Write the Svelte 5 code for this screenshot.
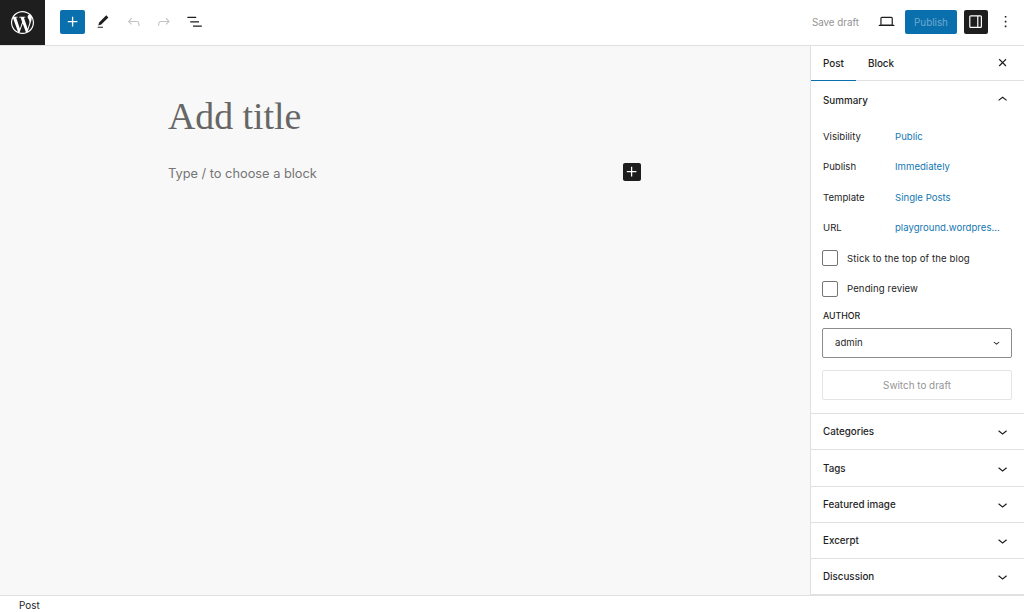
<script>
	const icons = {
		plus: 'M18 11.2h-5.2V6h-1.6v5.2H6v1.6h5.2V18h1.6v-5.2H18z',
		pen: 'M20.1 5.1L16.9 2 6.2 12.7l-1.3 4.4 4.5-1.3L20.1 5.1zM4 20.8h8v-1.5H4v1.5z',
		undo: 'M18.3 11.7c-.6-.6-1.4-.9-2.3-.9H6.7l2.9-3.3-1.1-1-4.5 5L8.5 16l1-1-2.7-2.7H16c.5 0 .9.2 1.3.5 1 1 1 3.4 1 4.5v.3h1.5v-.2c0-1.5 0-4.3-1.5-5.7z',
		redo: 'M15.6 6.5l-1.1 1 2.9 3.3H8c-.9 0-1.7.3-2.3.9-1.4 1.5-1.4 4.2-1.4 5.6v.2h1.5v-.3c0-1.1 0-3.5 1-4.5.3-.3.7-.5 1.3-.5h9.2L14.5 15l1.1 1.1 4.6-4.6-4.6-5z',
		list: 'M3 6h11v1.5H3V6zm3.5 5.5h11V13h-11v-1.5zM21 17H10v1.5h11V17z',
		laptop: 'M20.5 16h-.7V8c0-1.1-.9-2-2-2H6.2c-1.1 0-2 .9-2 2v8h-.7c-.8 0-1.5.7-1.5 1.5h20c0-.8-.7-1.5-1.5-1.5zM5.7 8c0-.3.2-.5.5-.5h11.6c.3 0 .5.2.5.5v7.6H5.7V8z',
		drawer: 'M18 4H6c-1.1 0-2 .9-2 2v12c0 1.1.9 2 2 2h12c1.1 0 2-.9 2-2V6c0-1.1-.9-2-2-2zm-4 14.5H6c-.3 0-.5-.2-.5-.5V6c0-.3.2-.5.5-.5h8v13zm4.5-.5c0 .3-.2.5-.5.5h-2.5v-13H18c.3 0 .5.2.5.5v12z',
		more: 'M13 19h-2v-2h2v2zm0-6h-2v-2h2v2zm0-6h-2V5h2v2z',
		close: 'M12 13.06l3.712 3.713 1.061-1.06L13.061 12l3.712-3.712-1.06-1.06L12 10.938 8.288 7.227l-1.061 1.06L10.939 12l-3.712 3.712 1.06 1.061L12 13.061z',
		up: 'M6.5 12.4L12 8l5.5 4.4-.9 1.2L12 10l-4.5 3.6-1-1.2z',
		down: 'M17.5 11.6L12 16l-5.5-4.4.9-1.2L12 14l4.5-3.6 1 1.2z'
	};
	const wp =
		'M21.469 6.825c.84 1.537 1.318 3.3 1.318 5.175 0 3.979-2.156 7.456-5.363 9.325l3.295-9.527c.615-1.54.82-2.771.82-3.864 0-.405-.026-.78-.07-1.11m-7.981.105c.647-.03 1.232-.105 1.232-.105.582-.075.514-.93-.067-.899 0 0-1.755.135-2.88.135-1.064 0-2.85-.15-2.85-.15-.585-.03-.661.855-.075.885 0 0 .54.061 1.125.09l1.68 4.605-2.37 7.08L5.354 6.9c.649-.03 1.234-.1 1.234-.1.585-.075.516-.93-.065-.896 0 0-1.746.138-2.874.138-.2 0-.438-.008-.69-.015C4.911 3.15 8.235 1.215 12 1.215c2.809 0 5.365 1.072 7.286 2.833-.046-.003-.091-.009-.141-.009-1.06 0-1.812.923-1.812 1.914 0 .89.513 1.643 1.06 2.531.411.72.89 1.643.89 2.977 0 .915-.354 2-.821 3.479l-1.075 3.585-3.9-11.61.001.014zM12 22.784c-1.059 0-2.081-.153-3.048-.437l3.237-9.406 3.315 9.087c.024.053.05.101.078.149-1.12.393-2.325.609-3.582.609M1.211 12c0-1.564.336-3.05.935-4.39L7.29 21.709C3.694 19.96 1.212 16.271 1.211 12M12 0C5.385 0 0 5.385 0 12s5.385 12 12 12 12-5.385 12-12S18.615 0 12 0';

	const rows = [
		['Visibility', 'Public'],
		['Publish', 'Immediately'],
		['Template', 'Single Posts'],
		['URL', 'playground.wordpres...']
	];
	const checks = ['Stick to the top of the blog', 'Pending review'];
	const panels = ['Categories', 'Tags', 'Featured image', 'Excerpt', 'Discussion'];
</script>

{#snippet icon(name, cls = '')}
	<svg class="icon {cls}" viewBox="0 0 24 24" aria-hidden="true"><path d={icons[name]} /></svg>
{/snippet}

<div class="editor">
	<header class="top">
		<a class="logo" href="#home" aria-label="WordPress">
			<svg viewBox="0 0 24 24" aria-hidden="true"><path d={wp} /></svg>
		</a>
		<div class="tools">
			<button class="inserter">{@render icon('plus')}</button>
			<button class="tool">{@render icon('pen', 'pen')}</button>
			<button class="tool off">{@render icon('undo', 'arrow')}</button>
			<button class="tool off">{@render icon('redo', 'arrow')}</button>
			<button class="tool">{@render icon('list')}</button>
		</div>
		<div class="actions">
			<span class="save">Save draft</span>
			<button class="tool view">{@render icon('laptop')}</button>
			<button class="publish">Publish</button>
			<button class="toggle">{@render icon('drawer')}</button>
			<button class="tool more">{@render icon('more')}</button>
		</div>
	</header>

	<div class="body">
		<main class="canvas">
			<div class="doc">
				<h1>Add title</h1>
				<div class="para">
					<span>Type / to choose a block</span>
					<button class="block-add">{@render icon('plus')}</button>
				</div>
			</div>
		</main>

		<aside class="side">
			<div class="tabs">
				<span class="tab active">Post</span>
				<span class="tab">Block</span>
				<button class="tool close">{@render icon('close')}</button>
			</div>

			<section class="summary">
				<div class="panel-head">
					<span>Summary</span>
					{@render icon('up')}
				</div>
				<div class="fields">
					{#each rows as [label, value]}
						<div class="row">
							<span class="label">{label}</span>
							<span class="value">{value}</span>
						</div>
					{/each}
					{#each checks as c}
						<label class="check"><span class="box"></span>{c}</label>
					{/each}
				</div>
				<div class="author">AUTHOR</div>
				<div class="select">
					<span>admin</span>
					{@render icon('down')}
				</div>
				<button class="switch">Switch to draft</button>
			</section>

			{#each panels as p}
				<div class="panel">
					<span>{p}</span>
					{@render icon('down')}
				</div>
			{/each}
		</aside>
	</div>

	<footer class="status">Post</footer>
</div>

<style>
	:global(body) {
		margin: 0;
	}

	.editor {
		width: 1024px;
		height: 612px;
		display: flex;
		flex-direction: column;
		overflow: hidden;
		background: #fff;
		color: #1e1e1e;
		font-family: Inter, 'Liberation Sans', sans-serif;
		font-size: 9.6px;
	}

	button {
		border: 0;
		padding: 0;
		background: none;
		font: inherit;
		color: inherit;
	}

	.icon {
		display: block;
		width: 19.2px;
		height: 19.2px;
		fill: currentColor;
		flex: none;
	}

	.icon.pen {
		width: 16px;
		height: 16px;
	}

	.icon.arrow {
		width: 17.6px;
		height: 17.6px;
	}

	.top {
		height: 44px;
		padding-bottom: 1px;
		flex: none;
		display: flex;
		align-items: center;
		border-bottom: 1px solid #e0e0e0;
	}

	.logo {
		width: 45px;
		height: 45px;
		align-self: flex-start;
		background: #1e1e1e;
		display: flex;
		align-items: center;
		justify-content: center;
	}

	.logo svg {
		width: 23px;
		height: 23px;
		fill: #fff;
	}

	.tools {
		display: flex;
		align-items: center;
		margin-left: 15px;
		gap: 5.5px;
	}

	.inserter {
		width: 25px;
		height: 24px;
		background: #0a70ad;
		color: #fff;
		border-radius: 2px;
		display: flex;
		align-items: center;
		justify-content: center;
	}

	.tool {
		width: 25px;
		height: 24px;
		display: flex;
		align-items: center;
		justify-content: center;
	}

	.off {
		color: #c4c4c4;
	}

	.actions {
		margin-left: auto;
		display: flex;
		align-items: center;
		padding-right: 6px;
	}

	.save {
		color: #949494;
		margin-right: 15px;
		font-size: 9.8px;
	}

	.publish {
		width: 52px;
		height: 24px;
		margin-left: 6px;
		background: #0a70ad;
		color: #6fa8d0;
		border-radius: 2px;
		font-size: 9.8px;
	}

	.toggle {
		width: 24px;
		height: 24px;
		margin-left: 7px;
		background: #1e1e1e;
		color: #fff;
		border-radius: 2px;
		display: flex;
		align-items: center;
		justify-content: center;
	}

	.more {
		margin-left: 5px;
		width: 25px;
	}

	.body {
		flex: 1;
		min-height: 0;
		display: flex;
	}

	.canvas {
		flex: 1;
		background: #f8f8f8;
	}

	.doc {
		width: 473px;
		margin-left: 168px;
		padding-top: 49px;
	}

	h1 {
		margin: 0;
		height: 42px;
		font-family: 'Liberation Serif', serif;
		font-weight: 400;
		font-size: 37.8px;
		line-height: 42px;
		color: #666;
	}

	.para {
		margin-top: 26px;
		display: flex;
		align-items: center;
		justify-content: space-between;
		font-size: 12.8px;
		color: #757575;
	}

	.block-add {
		width: 18px;
		height: 18px;
		margin-bottom: 2px;
		background: #1e1e1e;
		color: #fff;
		border-radius: 2px;
		display: flex;
		align-items: center;
		justify-content: center;
	}

	.side {
		width: 214px;
		flex: none;
		box-sizing: border-box;
		background: #fff;
		border-left: 1px solid #e0e0e0;
	}

	.tabs {
		height: 35px;
		box-sizing: border-box;
		display: flex;
		align-items: center;
		border-bottom: 1px solid #e0e0e0;
		font-size: 9.9px;
	}

	.tab {
		align-self: stretch;
		display: flex;
		align-items: center;
		justify-content: center;
		font-weight: 500;
		box-sizing: border-box;
		margin-bottom: -1px;
		border-bottom: 1.5px solid transparent;
	}

	.tab:nth-child(1) {
		width: 45px;
	}

	.tab:nth-child(2) {
		width: 50px;
	}

	.tab.active {
		border-bottom-color: #0a70ad;
	}

	.close {
		margin-left: auto;
		margin-right: 9px;
	}

	.summary {
		padding: 0 12px 13px 12px;
		border-bottom: 1px solid #e0e0e0;
	}

	.panel-head {
		height: 38px;
		display: flex;
		align-items: center;
		justify-content: space-between;
		font-weight: 500;
		font-size: 9.8px;
	}

	.fields {
		padding-top: 2px;
	}

	.row {
		height: 30.5px;
		display: flex;
		align-items: center;
	}

	.label {
		width: 72px;
	}

	.value {
		color: #1477b2;
	}

	.check {
		height: 30.5px;
		display: flex;
		align-items: center;
		gap: 9px;
		letter-spacing: 0.1px;
	}

	.box {
		width: 16px;
		height: 16px;
		margin-left: -1px;
		box-sizing: border-box;
		border: 1px solid #757575;
		border-radius: 2px;
	}

	.author {
		margin-top: 6px;
		font-size: 8.8px;
		font-weight: 500;
		line-height: 12px;
	}

	.select {
		margin: 6px 0 0 -1px;
		height: 30px;
		width: 190px;
		box-sizing: border-box;
		padding: 0 8px 1px 12px;
		border: 1px solid #8d8d8d;
		border-radius: 2px;
		display: flex;
		align-items: center;
		justify-content: space-between;
	}

	.select .icon {
		width: 13px;
		height: 13px;
	}

	.switch {
		display: block;
		margin: 12px 0 0 -1px;
		width: 190px;
		height: 30px;
		border: 1px solid #e4e4e4;
		border-radius: 2px;
		color: #949494;
		box-sizing: border-box;
		font-size: 9.9px;
	}

	.panel {
		height: 36.25px;
		box-sizing: border-box;
		padding: 0.6px 12px 0;
		display: flex;
		align-items: center;
		justify-content: space-between;
		font-weight: 500;
		font-size: 9.8px;
		border-bottom: 1px solid #e0e0e0;
	}

	.status {
		height: 17px;
		flex: none;
		box-sizing: border-box;
		border-top: 1px solid #e0e0e0;
		padding-left: 19px;
		line-height: 18px;
		font-size: 9.9px;
		background: #fff;
	}
</style>
